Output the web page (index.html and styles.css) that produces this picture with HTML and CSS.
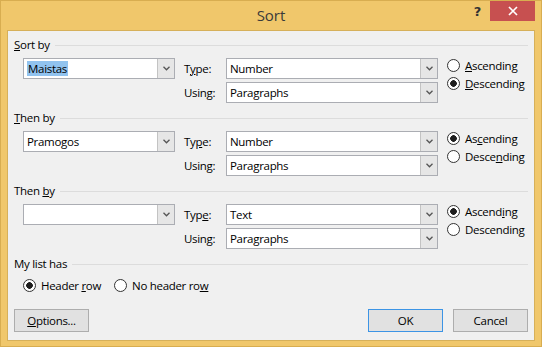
FILE: index.html
```html
<!DOCTYPE html>
<html lang="en">
<head>
    <meta charset="UTF-8">
    <meta name="viewport" content="width=device-width, initial-scale=1.0">
    <title>Sort</title>
    <link rel="stylesheet" href="styles.css">
</head>
<body>
    <div class="window">
        <header class="titlebar">
            <span></span>
            <h1 class="title">Sort</h1>
            <div class="controls">
                <span class="help">?</span>
                <button class="close" aria-label="Close">
                    <svg width="10" height="10" viewBox="0 0 10 10"><path d="M1 1L9 9M9 1L1 9" stroke="#fff" stroke-width="1.7" fill="none"/></svg>
                </button>
            </div>
        </header>

        <main class="client">
            <!-- Sort by -->
            <section class="group">
                <div class="legend"><span><u>S</u>ort by</span></div>
                <div class="key-row">
                    <div class="combo key"><span class="value"><span class="selected">Maistas</span></span><span class="arrow"><svg width="7" height="5" viewBox="0 0 7 5"><path d="M0.5 0.8L3.5 3.8L6.5 0.8" stroke="#555" stroke-width="1.3" fill="none"/></svg></span></div>
                    <span class="field-label">T<u>y</u>pe:</span>
                    <div class="combo"><span class="value">Number</span><span class="arrow"><svg width="7" height="5" viewBox="0 0 7 5"><path d="M0.5 0.8L3.5 3.8L6.5 0.8" stroke="#555" stroke-width="1.3" fill="none"/></svg></span></div>
                    <div class="order">
                        <label class="radio"><span class="dot"></span><span><u>A</u>scending</span></label>
                        <label class="radio checked"><span class="dot"></span><span><u>D</u>escending</span></label>
                    </div>
                    <span class="field-label using">Using:</span>
                    <div class="combo using"><span class="value">Paragraphs</span><span class="arrow"><svg width="7" height="5" viewBox="0 0 7 5"><path d="M0.5 0.8L3.5 3.8L6.5 0.8" stroke="#555" stroke-width="1.3" fill="none"/></svg></span></div>
                </div>
            </section>

            <!-- Then by -->
            <section class="group">
                <div class="legend"><span><u>T</u>hen by</span></div>
                <div class="key-row">
                    <div class="combo key"><span class="value">Pramogos</span><span class="arrow"><svg width="7" height="5" viewBox="0 0 7 5"><path d="M0.5 0.8L3.5 3.8L6.5 0.8" stroke="#555" stroke-width="1.3" fill="none"/></svg></span></div>
                    <span class="field-label">Ty<u>p</u>e:</span>
                    <div class="combo"><span class="value">Number</span><span class="arrow"><svg width="7" height="5" viewBox="0 0 7 5"><path d="M0.5 0.8L3.5 3.8L6.5 0.8" stroke="#555" stroke-width="1.3" fill="none"/></svg></span></div>
                    <div class="order">
                        <label class="radio checked"><span class="dot"></span><span>As<u>c</u>ending</span></label>
                        <label class="radio"><span class="dot"></span><span>Desce<u>n</u>ding</span></label>
                    </div>
                    <span class="field-label using">Using:</span>
                    <div class="combo using"><span class="value">Paragraphs</span><span class="arrow"><svg width="7" height="5" viewBox="0 0 7 5"><path d="M0.5 0.8L3.5 3.8L6.5 0.8" stroke="#555" stroke-width="1.3" fill="none"/></svg></span></div>
                </div>
            </section>

            <!-- Then by -->
            <section class="group">
                <div class="legend"><span>Then <u>b</u>y</span></div>
                <div class="key-row">
                    <div class="combo key"><span class="value"></span><span class="arrow"><svg width="7" height="5" viewBox="0 0 7 5"><path d="M0.5 0.8L3.5 3.8L6.5 0.8" stroke="#555" stroke-width="1.3" fill="none"/></svg></span></div>
                    <span class="field-label">Typ<u>e</u>:</span>
                    <div class="combo"><span class="value">Text</span><span class="arrow"><svg width="7" height="5" viewBox="0 0 7 5"><path d="M0.5 0.8L3.5 3.8L6.5 0.8" stroke="#555" stroke-width="1.3" fill="none"/></svg></span></div>
                    <div class="order">
                        <label class="radio checked"><span class="dot"></span><span>Ascend<u>i</u>ng</span></label>
                        <label class="radio"><span class="dot"></span><span>Descendin<u>g</u></span></label>
                    </div>
                    <span class="field-label using">Using:</span>
                    <div class="combo using"><span class="value">Paragraphs</span><span class="arrow"><svg width="7" height="5" viewBox="0 0 7 5"><path d="M0.5 0.8L3.5 3.8L6.5 0.8" stroke="#555" stroke-width="1.3" fill="none"/></svg></span></div>
                </div>
            </section>

            <!-- My list has -->
            <section class="group list-has">
                <div class="legend"><span>My list has</span></div>
                <div class="header-row">
                    <label class="radio checked"><span class="dot"></span><span>Header <u>r</u>ow</span></label>
                    <label class="radio"><span class="dot"></span><span>No header ro<u>w</u></span></label>
                </div>
            </section>

            <div class="buttons">
                <button class="btn"><u>O</u>ptions...</button>
                <div class="btn-group">
                    <button class="btn default">OK</button>
                    <button class="btn">Cancel</button>
                </div>
            </div>
        </main>
    </div>
</body>
</html>
```

FILE: styles.css
```css
* { box-sizing: border-box; }
body {
    margin: 0;
    font-family: "Open Sans", "Noto Sans", sans-serif;
    font-size: 11.5px;
    letter-spacing: -0.3px;
    color: #000;
}
u { text-decoration: underline; text-underline-offset: 1px; }

.window {
    width: 542px;
    height: 347px;
    background: #f0c76b;
    border: 1px solid #d8ad50;
    padding: 0 6px 5px 6px;
    display: flex;
    flex-direction: column;
}

/* title bar */
.titlebar {
    height: 29px;
    display: grid;
    grid-template-columns: 1fr auto 1fr;
}
.title {
    margin: 0;
    font-size: 15px;
    font-weight: normal;
    letter-spacing: 0;
    line-height: 29px;
    color: #3a3a3a;
}
.controls {
    justify-self: end;
    display: flex;
    align-items: flex-start;
}
.help {
    font-family: "DejaVu Sans", sans-serif;
    font-weight: bold;
    font-size: 13px;
    line-height: 22px;
    color: #333;
    margin-right: 9px;
}
.close {
    width: 45px;
    height: 20px;
    border: none;
    padding: 0;
    background: #c75050;
    display: flex;
    align-items: center;
    justify-content: center;
}

/* client area */
.client {
    flex: 1;
    background: #f0f0f0;
    border: 1px solid #d6b05a;
    padding: 6px 6px 8px 6px;
}
.group { margin-bottom: 7px; }
.legend {
    display: flex;
    align-items: center;
    gap: 5px;
    height: 16px;
    line-height: 16px;
}
.legend::after {
    content: "";
    flex: 1;
    height: 1px;
    background: #dcdcdc;
}

.key-row {
    display: grid;
    grid-template-columns: 152px 51px 212px 1fr;
    grid-template-rows: 21px 21px;
    row-gap: 3px;
    margin: 5px 0 0 9px;
}
.field-label {
    padding-left: 9px;
    line-height: 21px;
}
.field-label.using { grid-column: 2; grid-row: 2; }
.combo.using { grid-column: 3; grid-row: 2; }

.combo {
    display: flex;
    height: 21px;
    background: #fff;
    border: 1px solid #abadb3;
}
.combo .value {
    flex: 1;
    padding-left: 3px;
    line-height: 19px;
    white-space: nowrap;
}
.combo .arrow {
    width: 17px;
    background: #e6e6e6;
    border-left: 1px solid #c3c3c3;
    display: flex;
    align-items: center;
    justify-content: center;
}
.selected {
    background: #91c3ef;
    padding: 0 1px;
}

.order {
    grid-column: 4;
    grid-row: 1 / 3;
    margin-top: -1px;
    padding-left: 9px;
    display: flex;
    flex-direction: column;
    gap: 2px;
}
.radio {
    display: flex;
    align-items: center;
    gap: 5px;
    height: 16px;
    white-space: nowrap;
}
.dot {
    width: 13px;
    height: 13px;
    border: 1px solid #333;
    border-radius: 50%;
    background: #fff;
}
.radio.checked .dot {
    background: radial-gradient(circle, #1e1e1e 0 3px, #fff 3.6px);
}

.list-has { margin-bottom: 0; }
.header-row {
    display: flex;
    gap: 13px;
    margin: 5px 0 0 9px;
}

/* buttons */
.buttons {
    margin-top: 16px;
    display: flex;
    justify-content: space-between;
}
.btn-group { display: flex; gap: 10px; }
.btn {
    width: 75px;
    height: 23px;
    padding: 0;
    font-family: inherit;
    font-size: inherit;
    letter-spacing: inherit;
    color: #000;
    background: #e1e1e1;
    border: 1px solid #adadad;
}
.btn.default {
    border-color: #3c94e5;
}
```
